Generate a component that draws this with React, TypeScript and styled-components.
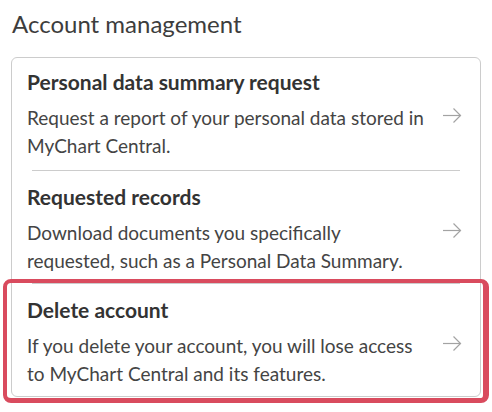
import React from "react";
import styled, { createGlobalStyle } from "styled-components";

const GlobalStyle = createGlobalStyle`
  html, body {
    margin: 0;
    padding: 0;
    background: #ffffff;
  }
  body {
    font-family: "Lato", "Open Sans", sans-serif;
    color: #333333;
  }
`;

const Page = styled.div`
  padding: 8px 11px 15px 11px;
  width: 470px;
`;

const Heading = styled.h2`
  margin: 0 0 17px 1px;
  font-size: 24px;
  line-height: 32px;
  font-weight: 400;
  color: #3d3d3d;
`;

const Card = styled.div`
  border: 1px solid #cccccc;
  border-radius: 6px;
  display: flex;
  flex-direction: column;
`;

const Item = styled.a<{ $first?: boolean }>`
  position: relative;
  display: grid;
  grid-template-columns: 400px 20px;
  column-gap: 15px;
  align-items: center;
  padding: ${(p) => (p.$first ? "12px 18px 10px 15px" : "14px 18px 8px 15px")};
  text-decoration: none;
  color: inherit;
  cursor: pointer;
`;

const Divider = styled.div`
  height: 1px;
  background: #cccccc;
  margin: 0 20px;
`;

const Text = styled.div`
  display: flex;
  flex-direction: column;
  gap: 10px;
`;

const Title = styled.div`
  font-size: 21px;
  line-height: 24px;
  font-weight: 700;
  color: #333333;
`;

const Description = styled.div`
  font-size: 19px;
  line-height: 28px;
  color: #444444;
`;

const Highlight = styled.div`
  position: absolute;
  left: -9px;
  right: -9px;
  top: -5px;
  bottom: -7px;
  border-style: solid;
  border-color: #d94b5e;
  border-width: 4px 6px 5px 4px;
  border-radius: 8px;
  pointer-events: none;
`;

const Arrow = () => (
  <svg width="20" height="17" viewBox="0 0 20 17" fill="none">
    <path d="M1 8.5H18.5" stroke="#a3a3a3" strokeWidth="1.2" />
    <path d="M11.5 1.5L18.5 8.5L11.5 15.5" stroke="#a3a3a3" strokeWidth="1.2" />
  </svg>
);

type Entry = { title: string; description: string; highlight?: boolean };

const entries: Entry[] = [
  {
    title: "Personal data summary request",
    description: "Request a report of your personal data stored in MyChart Central.",
  },
  {
    title: "Requested records",
    description:
      "Download documents you specifically requested, such as a Personal Data Summary.",
  },
  {
    title: "Delete account",
    description:
      "If you delete your account, you will lose access to MyChart Central and its features.",
    highlight: true,
  },
];

export default function App() {
  return (
    <>
      <GlobalStyle />
      <Page>
        <Heading>Account management</Heading>
        <Card>
          {entries.map((e, i) => (
            <React.Fragment key={e.title}>
              {i > 0 && <Divider />}
              <Item $first={i === 0}>
                <Text>
                  <Title>{e.title}</Title>
                  <Description>{e.description}</Description>
                </Text>
                <Arrow />
                {e.highlight && <Highlight />}
              </Item>
            </React.Fragment>
          ))}
        </Card>
      </Page>
    </>
  );
}
